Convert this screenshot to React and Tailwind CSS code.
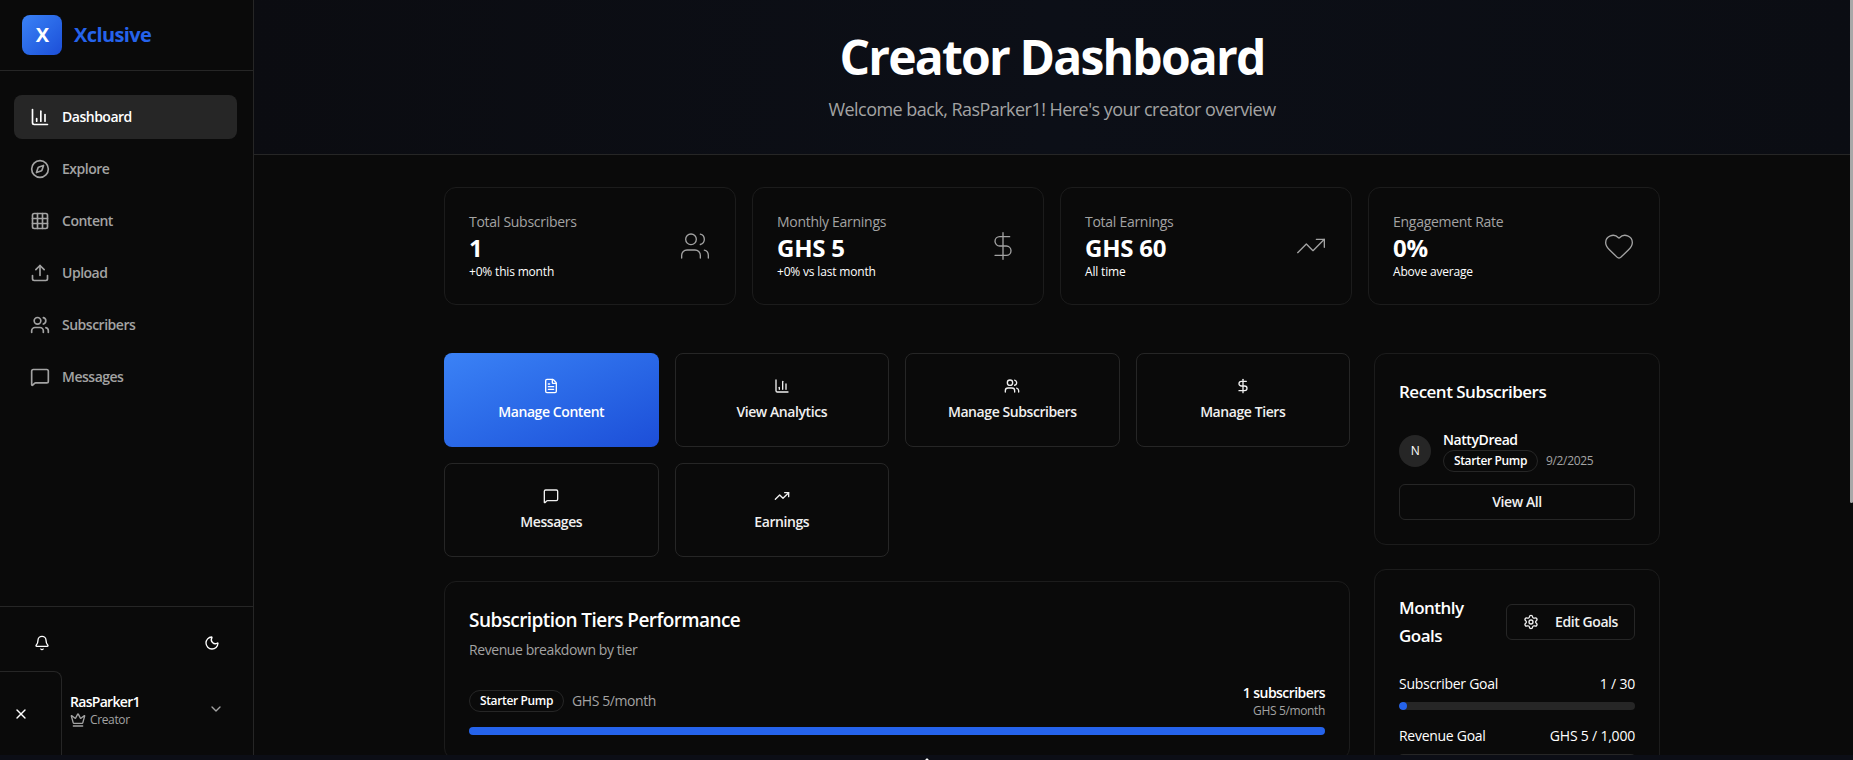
import React from "react";
import {
  ChartColumn,
  Compass,
  Grid3x3,
  Upload,
  Users,
  MessageSquare,
  Bell,
  Moon,
  X,
  Crown,
  ChevronDown,
  ChevronUp,
  FileText,
  DollarSign,
  TrendingUp,
  Heart,
  Settings,
} from "lucide-react";

const navItems = [
  { label: "Dashboard", icon: ChartColumn, active: true },
  { label: "Explore", icon: Compass },
  { label: "Content", icon: Grid3x3 },
  { label: "Upload", icon: Upload },
  { label: "Subscribers", icon: Users },
  { label: "Messages", icon: MessageSquare },
];

const stats = [
  { label: "Total Subscribers", value: "1", note: "+0% this month", icon: Users },
  { label: "Monthly Earnings", value: "GHS 5", note: "+0% vs last month", icon: DollarSign },
  { label: "Total Earnings", value: "GHS 60", note: "All time", icon: TrendingUp },
  { label: "Engagement Rate", value: "0%", note: "Above average", icon: Heart },
];

const actions = [
  { label: "Manage Content", icon: FileText, primary: true },
  { label: "View Analytics", icon: ChartColumn },
  { label: "Manage Subscribers", icon: Users },
  { label: "Manage Tiers", icon: DollarSign },
  { label: "Messages", icon: MessageSquare },
  { label: "Earnings", icon: TrendingUp },
];

function Badge() {
  return (
    <span className="inline-flex items-center h-[22px] px-[10px] rounded-full border border-[#262626] text-xs font-semibold text-white">
      Starter Pump
    </span>
  );
}

function Sidebar() {
  return (
    <aside className="w-[254px] shrink-0 h-full flex flex-col border-r border-[#262626] bg-[#0a0a0a]">
      <div className="h-[71px] shrink-0 flex items-center gap-3 px-[22px] border-b border-[#262626]">
        <div className="w-10 h-10 rounded-lg bg-gradient-to-br from-[#3b82f6] to-[#1d4ed8] flex items-center justify-center text-xl font-bold text-white">
          X
        </div>
        <span className="text-xl font-bold text-[#2563eb]">Xclusive</span>
      </div>
      <nav className="flex-1 flex flex-col gap-2 pl-[14px] pr-4 py-6">
        {navItems.map(({ label, icon: Icon, active }) => (
          <div
            key={label}
            className={
              active
                ? "h-11 flex items-center gap-3 px-4 rounded-lg bg-[#262626] text-white text-sm font-semibold"
                : "h-11 flex items-center gap-3 px-4 rounded-lg text-[#a3a3a3] text-sm font-semibold"
            }
          >
            <Icon className="w-5 h-5" strokeWidth={2} />
            <span className="!tracking-[-0.035em]">{label}</span>
          </div>
        ))}
      </nav>
      <div className="h-[154px] shrink-0 border-t border-[#262626] pt-7">
        <div className="flex items-center justify-between pl-[34px] pr-[33px] text-white">
          <Bell className="w-4 h-4" />
          <Moon className="w-4 h-4" />
        </div>
        <div className="flex items-center justify-between pl-[70px] pr-[29px] mt-[41px]">
          <div>
            <div className="text-sm font-semibold text-white leading-5 !tracking-[-0.05em]">RasParker1</div>
            <div className="flex items-center gap-1 text-xs text-[#a3a3a3] leading-4">
              <Crown className="w-4 h-4" />
              Creator
            </div>
          </div>
          <ChevronDown className="w-4 h-4 text-[#a3a3a3] -mt-[2px]" />
        </div>
      </div>
    </aside>
  );
}

function StatCard({ label, value, note, icon: Icon }) {
  return (
    <div className="rounded-xl border border-[#1c1c1c] bg-[#0a0a0a] p-6 flex items-center justify-between">
      <div>
        <p className="text-sm font-medium text-[#a3a3a3] !tracking-[-0.02em]">{label}</p>
        <p className="text-2xl font-bold text-white !tracking-[-0.01em]">{value}</p>
        <p className="text-xs text-white !tracking-[-0.015em]">{note}</p>
      </div>
      <Icon className="w-8 h-8 text-[#a3a3a3]" strokeWidth={1} />
    </div>
  );
}

function ActionCard({ label, icon: Icon, primary }) {
  return (
    <div
      className={
        primary
          ? "h-[94px] rounded-lg bg-gradient-to-br from-[#3b82f6] to-[#1d4ed8] flex flex-col items-center gap-2 pt-[25px] text-sm font-semibold text-white"
          : "h-[94px] rounded-lg border border-[#262626] flex flex-col items-center gap-2 pt-6 text-sm font-semibold text-[#f0f0f0]"
      }
    >
      <Icon className="w-4 h-4" />
      {label}
    </div>
  );
}

function GoalRow({ label, value, percent }) {
  return (
    <div>
      <div className="flex justify-between text-sm text-white">
        <span className="!tracking-[-0.02em]">{label}</span>
        <span className="!tracking-[-0.015em]">{value}</span>
      </div>
      <div className="h-2 mt-2 rounded-full bg-[#262626] overflow-hidden">
        <div className="h-full rounded-full bg-[#2563eb]" style={{ width: `${percent}%` }} />
      </div>
    </div>
  );
}

export default function App() {
  return (
    <div
      className="relative h-[760px] w-full flex overflow-hidden bg-[#0a0a0a] [&_*]:tracking-[-0.03em]"
      style={{ fontFamily: '"Open Sans", "Noto Sans", sans-serif' }}
    >
      <Sidebar />
      <main className="flex-1 min-w-0 pr-[3px]">
        <header className="h-[155px] border-b border-[#262626] bg-gradient-to-r from-[#0b0c11] via-[#0c0f17] to-[#0b0d13] pt-[33px] text-center">
          <h1 className="text-5xl font-bold text-white !tracking-[-0.0375em]">Creator Dashboard</h1>
          <p className="mt-[14px] text-lg text-[#a3a3a3]">Welcome back, RasParker1! Here's your creator overview</p>
        </header>

        <div className="max-w-7xl mx-auto px-8 py-8">
          <div className="grid grid-cols-4 gap-4 mb-12">
            {stats.map((s) => (
              <StatCard key={s.label} {...s} />
            ))}
          </div>

          <div className="grid grid-cols-4 gap-6">
            <div className="col-span-3 flex flex-col gap-6">
              <div className="grid grid-cols-4 gap-4">
                {actions.map((a) => (
                  <ActionCard key={a.label} {...a} />
                ))}
              </div>

              <div className="rounded-xl border border-[#1c1c1c] p-6">
                <h3 className="text-[19px] leading-7 font-semibold text-white">Subscription Tiers Performance</h3>
                <p className="mt-[6px] text-sm text-[#a3a3a3]">Revenue breakdown by tier</p>
                <div className="mt-[23px] flex items-center justify-between">
                  <div className="flex items-center gap-2">
                    <Badge />
                    <span className="text-sm text-[#a3a3a3]">GHS 5/month</span>
                  </div>
                  <div className="text-right">
                    <div className="text-sm font-semibold text-white !tracking-[-0.04em]">1 subscribers</div>
                    <div className="text-xs text-[#a3a3a3]">GHS 5/month</div>
                  </div>
                </div>
                <div className="mt-2 h-2 rounded-full bg-[#2563eb]" />
              </div>
            </div>

            <div className="flex flex-col gap-6">
              <div className="rounded-xl border border-[#1c1c1c] p-6">
                <h3 className="text-[17px] leading-7 font-semibold text-white">Recent Subscribers</h3>
                <div className="mt-6 flex items-center gap-3">
                  <div className="w-8 h-8 rounded-full bg-[#262626] flex items-center justify-center text-xs text-white">
                    N
                  </div>
                  <div>
                    <div className="text-sm font-semibold text-white">NattyDread</div>
                    <div className="flex items-center gap-2">
                      <Badge />
                      <span className="text-xs text-[#a3a3a3]">9/2/2025</span>
                    </div>
                  </div>
                </div>
                <div className="mt-3 h-9 rounded-md border border-[#262626] flex items-center justify-center text-sm font-semibold text-[#f0f0f0]">
                  View All
                </div>
              </div>

              <div className="rounded-xl border border-[#1c1c1c] p-6">
                <div className="flex items-center justify-between">
                  <h3 className="w-[90px] text-[17px] leading-7 font-semibold text-white">Monthly Goals</h3>
                  <div className="h-9 px-4 rounded-md border border-[#262626] flex items-center gap-4 text-sm font-semibold text-[#f0f0f0]">
                    <Settings className="w-4 h-4" />
                    Edit Goals
                  </div>
                </div>
                <div className="mt-6 flex flex-col gap-4">
                  <GoalRow label="Subscriber Goal" value="1 / 30" percent={3.33} />
                  <GoalRow label="Revenue Goal" value="GHS 5 / 1,000" percent={0.5} />
                </div>
              </div>
            </div>
          </div>
        </div>
      </main>

      {/* scrollbar thumb, dev drawer handle and bottom strip sit over the page */}
      <div className="absolute right-0 top-0 w-[3px] h-[503px] rounded-b-sm bg-[#a8a8a8]" />
      <div className="absolute left-0 bottom-[5px] w-[62px] h-[84px] rounded-tr-lg border-t border-r border-[#262626] bg-[#0a0a0a] flex items-center pl-[13px] text-white">
        <X className="w-4 h-4" />
      </div>
      <div className="absolute left-0 right-0 bottom-0 h-[5px] bg-[#0c0e16] flex justify-center overflow-hidden">
        <ChevronUp className="w-4 h-4 text-white -mt-[2px]" />
      </div>
    </div>
  );
}
